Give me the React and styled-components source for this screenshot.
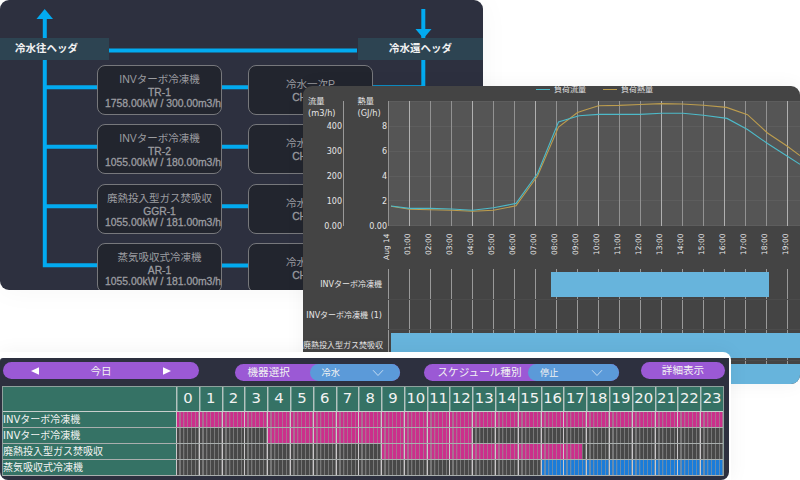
import styled, { createGlobalStyle } from "styled-components";

const UNITS = [
  { name: "INVターボ冷凍機", code: "TR-1", spec: "1758.00kW / 300.00m3/h", pump: "冷水一次P", pumpCode: "CHP1-1" },
  { name: "INVターボ冷凍機", code: "TR-2", spec: "1055.00kW / 180.00m3/h", pump: "冷水一次P", pumpCode: "CHP1-2" },
  { name: "廃熱投入型ガス焚吸収", code: "GGR-1", spec: "1055.00kW / 181.00m3/h", pump: "冷水一次P", pumpCode: "CHP1-3" },
  { name: "蒸気吸収式冷凍機", code: "AR-1", spec: "1055.00kW / 181.00m3/h", pump: "冷水一次P", pumpCode: "CHP1-4" },
];

const HOURS = Array.from({ length: 24 }, (_, hour) => hour);

const TIMES = HOURS.slice(0, 20).map(hour =>
  hour === 0 ? "Aug 14" : `${String(hour).padStart(2, "0")}:00`
);

// points are relative to the top left corner of the plot area
const FLOW =
  "3,105 21.5,107.4 42,107.4 63.5,108 84.5,109.2 105.5,106.8 128,102.4 149.5,72.5 170.5,21 191,14.8 210.5,13.4 252,13.4 273.5,12.3 295,12.3 315.5,14.3 339,17.4 359.5,28.5 379.5,42.5 399,55 412,63.3";
const HEAT =
  "3,105.2 21.5,108.2 42,108.7 63.5,109.2 84.5,110.2 105.5,109.2 128,104.8 149.5,75 170.5,26 189.5,11.5 197,9 210.5,4.8 231,4.4 252,3.5 273.5,2.6 294,3 315.5,4.3 338.5,6.4 359.5,13.7 379.5,32 399,45 412,54.6";

const RUNS = [
  { label: "INVターボ冷凍機", start: 163, width: 218 },
  { label: "INVターボ冷凍機 (1)", start: 0, width: 0 },
  { label: "廃熱投入型ガス焚吸収", start: 2.5, width: 410 },
  { label: "", start: 2.5, width: 410 },
];

const SCHEDULE = [
  { name: "INVターボ冷凍機", from: 0, to: 24, color: "#cb2f8b" },
  { name: "INVターボ冷凍機", from: 4, to: 13, color: "#cb2f8b" },
  { name: "廃熱投入型ガス焚吸収", from: 9, to: 17.8, color: "#cb2f8b" },
  { name: "蒸気吸収式冷凍機", from: 16, to: 24, color: "#1a7cd9" },
];

const PipingDiagram = () => (
  <DiagramWindow>
    <Pipes width="483" height="290" viewBox="0 0 483 290">
      <path d="M44.8 14V265.3H97M108 50.5H357M423.3 9V86M45 87.3H423M45 146.8H300M45 206.3H300M97 265.5H300" />
      <polygon points="44.7,9 53,19 36.5,19" />
      <polygon points="423.5,38.5 431.5,29 415.5,29" />
    </Pipes>
    <HeaderTag $left={0} $width={109} $textStart={15}>冷水往ヘッダ</HeaderTag>
    <HeaderTag $left={358} $width={125} $textStart={31}>冷水還ヘッダ</HeaderTag>
    {UNITS.map((unit, index) => (
      <div key={unit.code}>
        <Node $row={index} $left={97}>
          <UnitName>{unit.name}</UnitName>
          <UnitCode>{unit.code}</UnitCode>
          <UnitSpec>{unit.spec}</UnitSpec>
        </Node>
        <Node $row={index} $left={248} $pump>
          <UnitName>{unit.pump}</UnitName>
          <UnitCode>{unit.pumpCode}</UnitCode>
        </Node>
      </div>
    ))}
  </DiagramWindow>
);

const LoadChart = () => (
  <ChartWindow>
    <Legend>
      <LegendItem $color="#4bb5c4">負荷流量</LegendItem>
      <LegendItem $color="#b99a4b">負荷熱量</LegendItem>
    </Legend>

    <ChartRow>
      <Axis $width={41} $indent={5}>
        <AxisTitle>流量<br />(m3/h)</AxisTitle>
        {["400", "300", "200", "100", "0.00"].map(tick => (
          <Tick key={tick}>{tick}</Tick>
        ))}
      </Axis>
      <Axis $width={45} $indent={13.5}>
        <AxisTitle>熱量<br />(GJ/h)</AxisTitle>
        {["8", "6", "4", "2", "0.00"].map(tick => (
          <Tick key={tick}>{tick}</Tick>
        ))}
      </Axis>
      <Plot width="412" height="125" viewBox="0 0 412 125">
        <rect width="412" height="125" fill="#555" />
        {[0.5, 25.5, 50.5, 75.5, 99.5, 124.5].map(y => (
          <line key={y} x1="0" x2="412" y1={y} y2={y} stroke="#5d5d5d" />
        ))}
        {TIMES.map((time, index) => (
          <line key={time} x1={index * 21 + 0.5} x2={index * 21 + 0.5} y1="0" y2="125" stroke={index % 3 === 1 ? "#b0b0b0" : "#929292"} />
        ))}
        <polyline points={HEAT} stroke="#bd9d4e" />
        <polyline points={FLOW} stroke="#4dbac9" />
      </Plot>
    </ChartRow>

    <TimeAxis>
      {TIMES.map(time => (
        <Time key={time}>{time}</Time>
      ))}
    </TimeAxis>

    {RUNS.map((run, index) => (
      <RunRow key={index}>
        <RunLabel>{run.label}</RunLabel>
        <RunTrack>
          <RunBar $start={run.start} $width={run.width} />
        </RunTrack>
      </RunRow>
    ))}
  </ChartWindow>
);

const Chevron = () => (
  <svg width="12" height="8" viewBox="0 0 12 8" fill="none" stroke="#c3dcf2">
    <path d="M1 1.2 6 6.5 11 1.2" />
  </svg>
);

const Schedule = () => (
  <ScheduleFrame>
    <ScheduleWindow>
      <Toolbar>
        <DayPicker>
          <Arrow viewBox="0 0 8 8"><path d="M0 4 8 .3V7.7Z" /></Arrow>
          今日
          <Arrow viewBox="0 0 8 8"><path d="M8 4 0 .3V7.7Z" /></Arrow>
        </DayPicker>
        <Field $width={165.5} $margin={35.5}>
          <FieldLabel $width={75} $indent={13}>機器選択</FieldLabel>
          <Select>冷水<Chevron /></Select>
        </Field>
        <Field $width={195} $margin={24}>
          <FieldLabel $width={104} $indent={13.5}>スケジュール種別</FieldLabel>
          <Select>停止<Chevron /></Select>
        </Field>
        <DetailButton>詳細表示</DetailButton>
      </Toolbar>

      <Table>
        <HeadRow>
          <NameCell />
          <HourCells>
            {HOURS.map(hour => (
              <Hour key={hour}>{hour}</Hour>
            ))}
          </HourCells>
        </HeadRow>
        {SCHEDULE.map((item, index) => (
          <BodyRow key={index}>
            <NameCell>{item.name}</NameCell>
            <Track $from={item.from} $to={item.to} $color={item.color}>
              {HOURS.map(hour => (
                <Slot key={hour} />
              ))}
            </Track>
          </BodyRow>
        ))}
      </Table>
    </ScheduleWindow>
  </ScheduleFrame>
);

const App = () => (
  <Page>
    <GlobalStyle />
    <PipingDiagram />
    <LoadChart />
    <Schedule />
  </Page>
);

export default App;

const GlobalStyle = createGlobalStyle`
  * {
    box-sizing: border-box;
  }

  body {
    margin: 0;
    background: #fff;
    font-family: "DejaVu Sans", "Noto Sans CJK JP", sans-serif;
  }
`;

const Page = styled.main`
  position: relative;
  width: 800px;
  height: 480px;
  overflow: hidden;
`;

const DiagramWindow = styled.section`
  position: absolute;
  top: 0;
  left: 0;
  width: 483px;
  height: 290px;
  overflow: hidden;
  border-radius: 9px;
  background: #2d303f;
  box-shadow: 0 0 30px rgba(0, 0, 0, 0.04);
  font-family: "Liberation Sans", "Noto Sans CJK JP", sans-serif;
`;

const Pipes = styled.svg`
  position: absolute;
  inset: 0;

  path {
    fill: none;
    stroke: #02aaf0;
    stroke-width: 4;
  }

  polygon {
    fill: #02aaf0;
  }
`;

const HeaderTag = styled.div`
  position: absolute;
  top: 38px;
  left: ${props => props.$left}px;
  width: ${props => props.$width}px;
  height: 22px;
  padding-left: ${props => props.$textStart}px;
  background: #2d4452;
  color: #f2f2f2;
  font-size: 10.5px;
  font-weight: 700;
  line-height: 21px;
  white-space: nowrap;
`;

const Node = styled.div`
  position: absolute;
  top: ${props => 65 + props.$row * 59.3}px;
  left: ${props => props.$left}px;
  display: flex;
  flex-direction: column;
  align-items: center;
  width: 125px;
  height: 50px;
  padding-top: ${props => (props.$pump ? 11 : 6)}px;
  border: 1px solid #77787c;
  border-radius: 8px;
  background: #22252e;
  color: #9b9ca0;
  white-space: nowrap;
`;

const UnitName = styled.div`
  font-size: 10.5px;
  line-height: 14px;
`;

const UnitCode = styled.div`
  font-size: 10.3px;
  line-height: 13px;
  -webkit-text-stroke: 0.3px;
`;

const UnitSpec = styled.div`
  margin-left: 7px;
  font-size: 10.4px;
  line-height: 9px;
  -webkit-text-stroke: 0.3px;
`;

const ChartWindow = styled.section`
  position: absolute;
  top: 86px;
  left: 303px;
  width: 497px;
  height: 298px;
  overflow: hidden;
  border-radius: 9px;
  background: #444;
  box-shadow: 0 0 20px rgba(0, 0, 0, 0.05);
  color: #e6e6e6;
  font-size: 8px;
`;

const Legend = styled.div`
  display: flex;
  gap: 17px;
  height: 15px;
  padding-left: 233px;
  line-height: 8px;
`;

const LegendItem = styled.div`
  display: flex;
  gap: 4px;

  &::before {
    content: "";
    width: 14px;
    height: 1px;
    margin-top: 3px;
    background: ${props => props.$color};
  }
`;

const ChartRow = styled.div`
  display: flex;
  height: 125px;
`;

const Axis = styled.div`
  width: ${props => props.$width}px;
  padding-left: ${props => props.$indent}px;
  border-right: 1px solid #999;
`;

const AxisTitle = styled.div`
  height: 20px;
  margin-top: -6px;
  font-size: 8.2px;
  line-height: 12px;
`;

const Tick = styled.div`
  height: 24.9px;
  padding-right: 1px;
  line-height: 24.9px;
  text-align: right;
`;

const Plot = styled.svg`
  flex: none;
  margin-left: -1px;

  polyline {
    fill: none;
    stroke-width: 1.1;
  }
`;

const TimeAxis = styled.div`
  display: flex;
  height: 43px;
  padding: 7px 0 0 73px;
`;

const Time = styled.div`
  display: flex;
  flex: none;
  justify-content: flex-end;
  width: 21px;
  height: 26px;
  font-size: 7.5px;
  line-height: 21px;
  writing-mode: vertical-rl;
  transform: rotate(180deg);
  white-space: nowrap;
`;

const RunRow = styled.div`
  display: flex;
  height: 30.5px;
`;

const RunLabel = styled.div`
  flex: none;
  width: 85px;
  padding-right: 6px;
  line-height: 32px;
  text-align: right;
  white-space: nowrap;
`;

const RunTrack = styled.div`
  flex: none;
  width: 412px;
  padding-top: 3px;
  border-bottom: 1px solid #4b4b4b;
  background: repeating-linear-gradient(90deg, #999 0 1px, transparent 1px 21px);
`;

const RunBar = styled.div`
  width: ${props => props.$width}px;
  height: 25px;
  margin-left: ${props => props.$start}px;
  background: #67b4dc;
`;

const ScheduleFrame = styled.section`
  position: absolute;
  top: 352px;
  left: 0;
  width: 731px;
  height: 128px;
  padding: 6px 2px 0 0;
  border-radius: 0 8px 0 0;
  background: #fff;
  box-shadow: 0 0 20px rgba(0, 0, 0, 0.05);
`;

const ScheduleWindow = styled.div`
  height: 122px;
  overflow: hidden;
  border-radius: 3px 0 8px 8px;
  background: #2d303f;
  color: #f2f2f2;
`;

const Toolbar = styled.div`
  display: flex;
  height: 28px;
  padding: 4px 0 0 3px;
  font-size: 10.6px;
`;

const DayPicker = styled.div`
  display: flex;
  align-items: center;
  justify-content: space-between;
  width: 196px;
  height: 17px;
  padding: 0 28px;
  border-radius: 9px;
  background: #9b59d5;
`;

const Arrow = styled.svg`
  width: 8px;
  height: 8px;
  fill: #fff;
`;

const Field = styled.div`
  display: flex;
  width: ${props => props.$width}px;
  height: 17px;
  margin: 2px 0 0 ${props => props.$margin}px;
  border-radius: 9px;
  background: #9b59d5;
`;

const FieldLabel = styled.div`
  flex: none;
  width: ${props => props.$width}px;
  padding-left: ${props => props.$indent}px;
  line-height: 16px;
  white-space: nowrap;
`;

const Select = styled.div`
  display: flex;
  flex: 1;
  align-items: center;
  justify-content: space-between;
  padding: 0 16px 0 12px;
  border-radius: 9px;
  background: #5b9ad9;
  font-size: 9.2px;
  line-height: 15px;
`;

const DetailButton = styled.div`
  width: 84px;
  height: 17px;
  margin-left: 22px;
  border-radius: 9px;
  background: #9b59d5;
  line-height: 16px;
  text-align: center;
`;

const Table = styled.div`
  width: 722px;
  margin-left: 2px;
  border: 1px solid #8fa19d;
  border-bottom: 0;
`;

const HeadRow = styled.div`
  display: flex;
  height: 25px;
  border-bottom: 1px solid #c9cfcd;
`;

const BodyRow = styled.div`
  display: flex;
  height: 16px;
  border-bottom: 1px solid #a9afae;
`;

const NameCell = styled.div`
  flex: none;
  width: 173px;
  background: #357265;
  font-size: 10px;
  line-height: 15px;
  white-space: nowrap;
`;

const HourCells = styled.div`
  display: grid;
  flex: 1;
  grid-template-columns: repeat(24, 1fr);
  background: #357265;
`;

const Hour = styled.div`
  border-left: 1px solid #b4c2bf;
  box-shadow: inset 1px 0 #6f988f;
  font-size: 14.8px;
  line-height: 22px;
  text-align: center;
`;

const Track = styled(HourCells)`
  background: linear-gradient(
    90deg,
    #484848 ${props => (props.$from / 24) * 100}%,
    ${props => props.$color} ${props => (props.$from / 24) * 100}% ${props => (props.$to / 24) * 100}%,
    #484848 ${props => (props.$to / 24) * 100}%
  );
`;

const Slot = styled.div`
  border-left: 1px solid #cbc8ca;
  background: repeating-linear-gradient(
    90deg,
    transparent 0 2.3px,
    rgba(150, 150, 150, 0.6) 2.5px 3.5px,
    transparent 3.8px
  );
`;
